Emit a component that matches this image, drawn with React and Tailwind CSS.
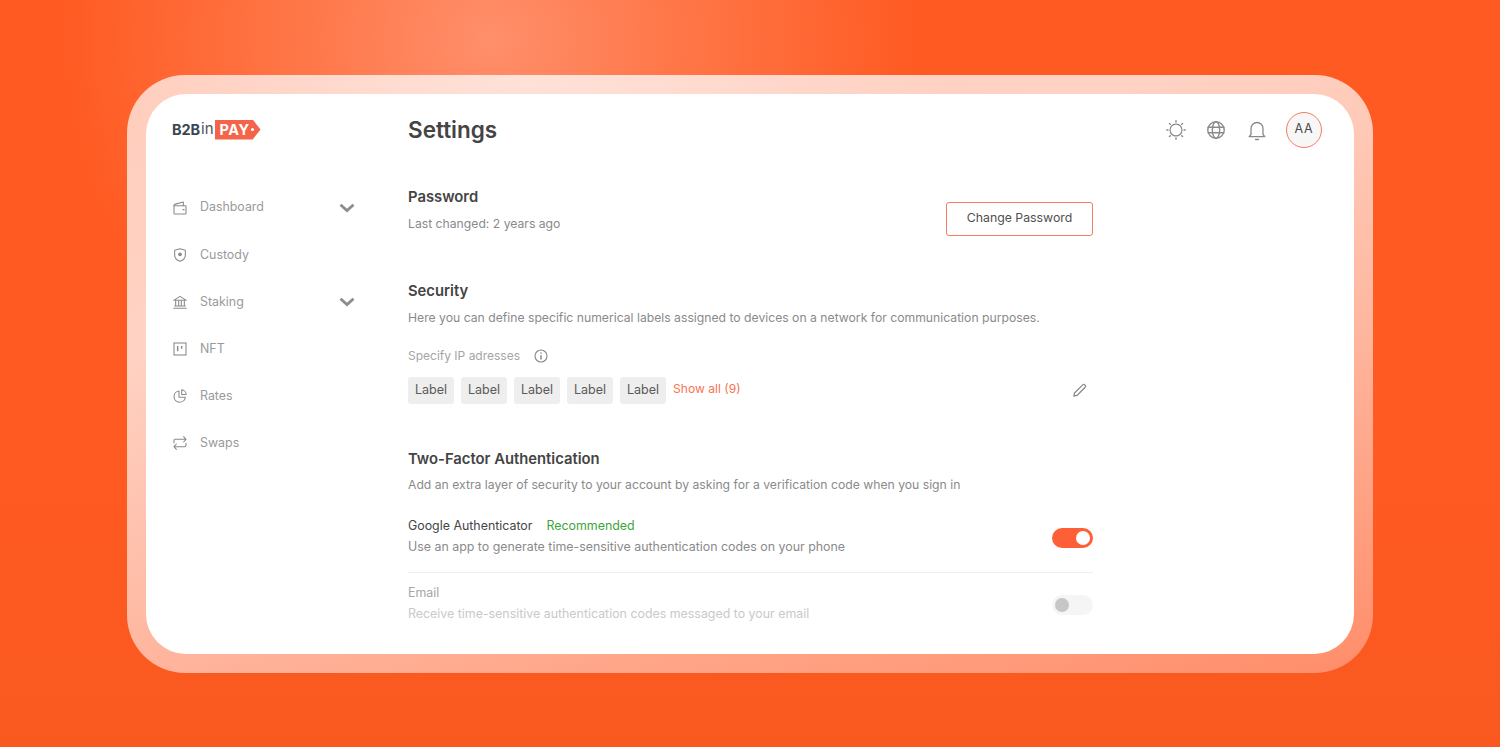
import React from "react";

const Ic = ({ size = 16, sw = 1.6, color = "#8a8a8a", children, cls = "" }) => (
  <svg width={size} height={size} viewBox="0 0 24 24" fill="none" stroke={color} strokeWidth={sw} strokeLinecap="round" strokeLinejoin="round" className={"shrink-0 " + cls}>
    {children}
  </svg>
);

const Chevron = () => (
  <svg width="16" height="10" viewBox="0 0 16 10" fill="none" stroke="#8c8c8c" strokeWidth="2.8" className="shrink-0">
    <path d="M1.5 1.800 8 7.600l6.500-5.800" />
  </svg>
);

const nav = [
  { t: "Dashboard", chev: true, h: "h-[48px]", icon: <><path d="M3 8.500V20a1 1 0 0 0 1 1h16a1 1 0 0 0 1-1V9.500a1 1 0 0 0-1-1H3Z" /><path d="M3 8.500c0-1.200.7-2 1.800-2.300L17 3v5.500" /><path d="M16.500 14.500h1.500" strokeWidth="2" /></> },
  { t: "Custody", h: "h-[47px]", icon: <><path d="M12 2.500 4 5v7c0 4.700 3.400 8 8 9.500 4.600-1.500 8-4.800 8-9.500V5l-8-2.500Z" /><circle cx="12" cy="11" r="2" fill="#8a8a8a" /></> },
  { t: "Staking", chev: true, h: "h-[47px]", icon: <><path d="M2.500 9.500 12 3.500l9.500 6h-19Z" /><path d="M5.500 10v8M10 10v8M14 10v8M18.500 10v8M4 18h16M2.500 21.500h19" /></> },
  { t: "NFT", h: "h-[47px]", icon: <><rect x="3" y="3" width="18" height="18" strokeLinejoin="miter" /><path d="M8.500 7.500v8M14.500 7.500v4" strokeWidth="2.200" strokeLinecap="butt" /></> },
  { t: "Rates", h: "h-[47px]", icon: <><path d="M10.500 4.500a8.500 8.500 0 1 0 9.500 9.500h-9.500V4.500Z" /><path d="M14.500 2.800a7 7 0 0 1 6.700 7h-6.700v-7Z" /></> },
  { t: "Swaps", h: "h-[47px]", icon: <><path d="M3 11.500V8.500a2 2 0 0 1 2-2h16M17.500 2.500l3.500 4-3.500 4" /><path d="M21 12.500v3a2 2 0 0 1-2 2H3M6.500 13.500 3 17.500l3.500 4" /></> },
];

const Logo = () => (
  <div className="flex items-center h-[20px] mt-[1px]">
    <span className="text-[14.500px] font-bold text-[#3a4653] tracking-[-0.1px]">B2B</span>
    <span className="text-[15px] text-[#4a535c] ml-[1px]">in</span>
    <span className="ml-[1px] h-[20px] w-[46px] pl-[5px] bg-[#f4644a] text-white text-[14.500px] font-bold tracking-[0.5px] leading-[20px] [clip-path:polygon(0_0,83%_0,100%_50%,83%_100%,0_100%)] relative">
      PAY
      <span className="absolute right-[6.500px] top-[8.500px] w-[3px] h-[3px] rounded-full bg-white" />
    </span>
  </div>
);

const Label = () => (
  <span className="h-[27px] w-[46px] flex items-center justify-center rounded-[3px] bg-[#eeeeee] text-[12.500px] text-[#5a5a5a]">Label</span>
);

export default function App() {
  return (
    <div className="w-[1500px] h-[747px] flex items-center justify-center overflow-hidden font-['Inter',sans-serif] bg-[radial-gradient(ellipse_430px_420px_at_490px_40px,#ff8f6b_0%,rgba(255,126,82,0.85)_40%,rgba(255,90,34,0)_100%),linear-gradient(180deg,#ff5a22_0%,#ff5a22_60%,#f9591f_100%)]">
      <div className="w-[1246px] h-[598px] p-[19px] rounded-[58px] bg-[radial-gradient(ellipse_420px_120px_at_400px_0px,#ffe2d9_0%,rgba(255,226,217,0)_100%),linear-gradient(165deg,#ffcdbc_0%,#ffd2c3_30%,#ffb9a2_60%,#ff8d69_100%)]">
        <div className="w-full h-full bg-white rounded-[40px] flex">
          <aside className="w-[262px] shrink-0 pl-[26px] pr-[53px] pt-[25px]">
            <Logo />
            <nav className="mt-[44px]">
              {nav.map((n) => (
                <div key={n.t} className={"flex items-center " + n.h}>
                  <Ic size={16}>{n.icon}</Ic>
                  <span className="ml-[12px] text-[12.400px] text-[#9a9a9a] flex-1">{n.t}</span>
                  {n.chev && <Chevron />}
                </div>
              ))}
            </nav>
          </aside>

          <main className="flex-1 pr-[32px]">
            <header className="flex items-center justify-between h-[71px] pt-[1px]">
              <h1 className="text-[22.500px] font-semibold text-[#444444]">Settings</h1>
              <div className="flex items-center">
                <Ic size={22} sw={1.3} cls="ml-[1px]">
                  <circle cx="12" cy="12" r="6.500" />
                  <path d="M12 2v1.200M12 20.800V22M2 12h1.200M20.800 12H22M4.900 4.900l.9.9M18.200 18.200l.9.9M4.900 19.100l.9-.9M18.200 5.800l.9-.9" strokeWidth="1.600" />
                </Ic>
                <Ic size={22} sw={1.5} cls="ml-[18px]">
                  <circle cx="12" cy="12" r="9" />
                  <ellipse cx="12" cy="12" rx="4" ry="9" />
                  <path d="M3.500 9h17M3.500 15h17" />
                </Ic>
                <Ic size={24} sw={1.3} cls="ml-[18px]">
                  <path d="M6 16.500V10.500a6 6 0 0 1 12 0v6l1.800 2.200H4.200L6 16.500Z" />
                  <path d="M10.500 21.500h3" />
                </Ic>
                <div className="ml-[17px] w-[36px] h-[36px] rounded-full bg-[#f7f7f7] border border-[#f67c60] flex items-center justify-center text-[12.500px] text-[#4a4a4a] tracking-[0.8px]">AA</div>
              </div>
            </header>

            <div className="w-[685px]">
              <section className="flex items-start justify-between mt-[20px]">
                <div>
                  <h2 className="text-[14.800px] font-semibold text-[#444444] leading-[24px]">Password</h2>
                  <p className="text-[12.200px] text-[#8a8a8a] leading-[18px] mt-[6px]">Last changed: 2 years ago</p>
                </div>
                <button className="w-[147px] h-[34px] mt-[17px] rounded-[3px] border border-[#f67c60] text-[12.300px] text-[#505050] bg-white">Change Password</button>
              </section>

              <section className="mt-[43px]">
                <h2 className="text-[14.800px] font-semibold text-[#444444] leading-[24px]">Security</h2>
                <p className="text-[12.200px] text-[#8a8a8a] leading-[18px] mt-[6px]">Here you can define specific numerical labels assigned to devices on a network for communication purposes.</p>
                <div className="flex items-center mt-[20px] h-[18px]">
                  <span className="text-[12px] text-[#a5a5a5]">Specify IP adresses</span>
                  <Ic size={16} sw={1.700} cls="ml-[13px]">
                    <circle cx="12" cy="12" r="9" />
                    <path d="M12 11.500v5M12 7.500v.5" strokeWidth="2.200" />
                  </Ic>
                </div>
                <div className="flex items-center mt-[12px] h-[27px]">
                  <div className="flex gap-[7px]">
                    <Label /><Label /><Label /><Label /><Label />
                  </div>
                  <span className="ml-[7px] text-[12.100px] text-[#fb7352] flex-1 -mt-[1px]">Show all (9)</span>
                  <Ic size={17} sw={1.800} cls="mr-[5px]">
                    <path d="M4 20l1-4.500L16.500 4a2 2 0 0 1 3 0l.5.500a2 2 0 0 1 0 3L8.500 19 4 20Z" />
                  </Ic>
                </div>
              </section>

              <section className="mt-[43px]">
                <h2 className="text-[14.800px] font-semibold text-[#444444] leading-[24px]">Two-Factor Authentication</h2>
                <p className="text-[12.200px] text-[#8a8a8a] leading-[18px] mt-[5px]">Add an extra layer of security to your account by asking for a verification code when you sign in</p>
                <div className="flex items-center justify-between h-[71px] mt-[8px] pb-[1px] border-b border-[#eeeeee]">
                  <div>
                    <div className="text-[12.400px] text-[#454545] leading-[18px]">Google Authenticator<span className="ml-[14px] text-[#3aa63a]">Recommended</span></div>
                    <div className="text-[12.400px] text-[#8a8a8a] leading-[18px] mt-[3px]">Use an app to generate time-sensitive authentication codes on your phone</div>
                  </div>
                  <div className="w-[41px] h-[20px] rounded-full bg-[#ff5f36] flex items-center justify-end pr-[3px] mt-[4px]">
                    <span className="w-[14px] h-[14px] rounded-full bg-white" />
                  </div>
                </div>
                <div className="flex items-center justify-between mt-[11px]">
                  <div>
                    <div className="text-[12.400px] text-[#a5a5a5] leading-[18px]">Email</div>
                    <div className="text-[12.400px] text-[#c9c9c9] leading-[18px] mt-[3px]">Receive time-sensitive authentication codes messaged to your email</div>
                  </div>
                  <div className="w-[41px] h-[20px] rounded-full bg-[#f5f5f5] flex items-center pl-[3px] mt-[4px]">
                    <span className="w-[14px] h-[14px] rounded-full bg-[#c6c6c6]" />
                  </div>
                </div>
              </section>
            </div>
          </main>
        </div>
      </div>
    </div>
  );
}
